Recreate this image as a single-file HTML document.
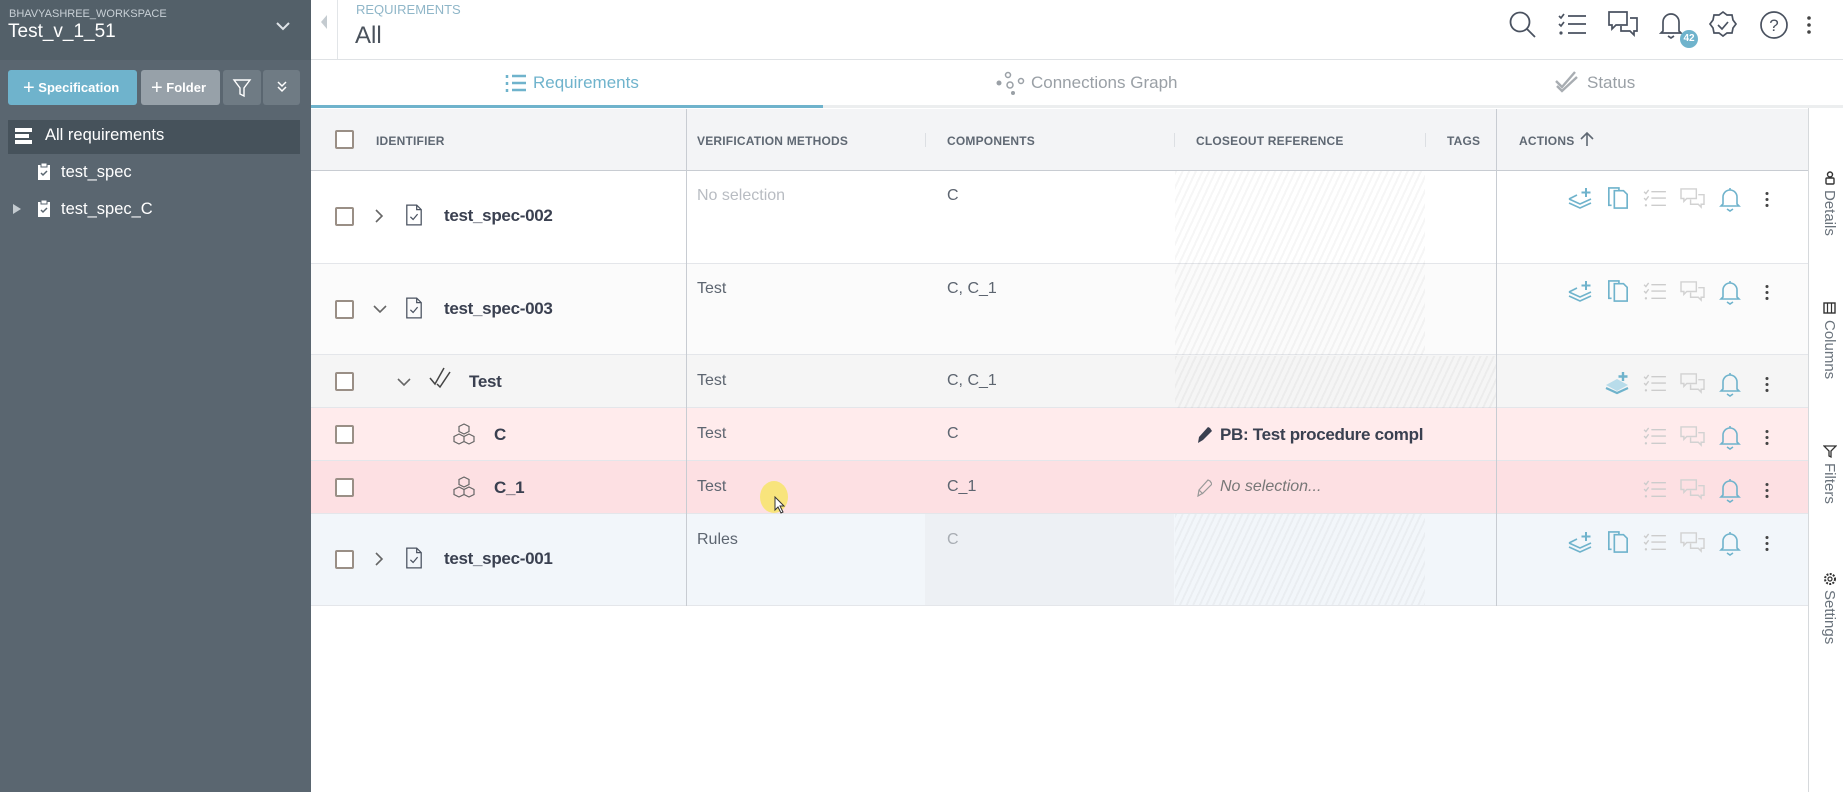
<!DOCTYPE html>
<html><head><meta charset="utf-8"><style>
*{box-sizing:border-box;margin:0;padding:0}
body{width:1843px;height:792px;overflow:hidden;font-family:"Liberation Sans",sans-serif;background:#fff;position:relative;color:#3c4452}
.a{position:absolute}
.sb{left:0;top:0;width:311px;height:792px;background:#5a6670}
.t{white-space:nowrap}
.cb{position:absolute;width:19px;height:19px;border:2px solid #9a8f86;border-radius:2px;background:#fff}
.row{position:absolute;left:311px;width:1497px;border-bottom:1px solid #e4e6ea}
.hd{font-size:12px;font-weight:bold;color:#5f6873;letter-spacing:.2px}
.id{font-size:17px;font-weight:bold;color:#3a4050;letter-spacing:-.3px}
.cell{font-size:16px;color:#5d6570}
.hatch{background:repeating-linear-gradient(115deg,rgba(0,0,0,.035) 0 2px,transparent 2px 6px)}
.vt{writing-mode:vertical-rl;font-size:15px;color:#6a737c}
</style></head><body>
<svg width="0" height="0" style="position:absolute">
<defs>
<symbol id="doc" viewBox="0 0 20 24"><path d="M2 1h11l5 5v17H2z M13 1v5h5" fill="none" stroke="#4a5260" stroke-width="1.4"/><path d="M6 14l3 3 5-6" fill="none" stroke="#4a5260" stroke-width="1.4"/></symbol>
<symbol id="lay" viewBox="0 0 26 24"><path d="M2 13l11 5 11-5 M2 17l11 5 11-5 M2 13l8-4" fill="none" stroke="#6fb3cc" stroke-width="1.6"/><path d="M19 2v9 M14.5 6.5h9" stroke="#6fb3cc" stroke-width="2"/></symbol>
<symbol id="cpy" viewBox="0 0 24 26"><path d="M8 5h10l4 4v15H8z M5 21H2V2h11v3" fill="none" stroke="#6fb3cc" stroke-width="1.8"/></symbol>
<symbol id="chk" viewBox="0 0 26 22"><path d="M1 3l2 2 3-4 M1 10l2 2 3-4 M9 3h16 M9 10h16 M9 18h16" fill="none" stroke="#ccc" stroke-width="1.5"/><circle cx="3" cy="18" r="1.3" fill="#ccc"/></symbol>
<symbol id="cht" viewBox="0 0 28 24"><path d="M2 2h16v10H8l-3 3v-3H2z M20 8h6v10h-3v3l-3-3h-8v-5" fill="none" stroke="#d2d2d2" stroke-width="1.5"/></symbol>
<symbol id="bel" viewBox="0 0 22 26"><path d="M4 18V11a7 7 0 0 1 14 0v7l2 2H2z M11 2v2 M8 23l3 2 3-2" fill="none" stroke="#6fb3cc" stroke-width="1.6"/></symbol>
<symbol id="cube" viewBox="0 0 24 24"><path d="M12 2l5 2.5v5L12 12 7 9.5v-5z M7 12l5 2.5v5L7 22l-5-2.5v-5z M17 12l5 2.5v5L17 22l-5-2.5v-5z" fill="none" stroke="#666" stroke-width="1.2"/></symbol>
<symbol id="dots" viewBox="0 0 6 20"><circle cx="3" cy="3" r="1.8" fill="#444"/><circle cx="3" cy="10" r="1.8" fill="#444"/><circle cx="3" cy="17" r="1.8" fill="#444"/></symbol>
</defs></svg>

<div class="a sb"></div>
<div class="a" style="left:0;top:0;width:311px;height:60px;background:#536069"></div>
<div class="a t" style="left:9px;top:8px;font-size:11px;color:#c8d0d6">BHAVYASHREE_WORKSPACE</div>
<div class="a t" style="left:8px;top:21px;font-size:19px;color:#fff">Test_v_1_51</div>
<svg class="a" style="left:276px;top:22px" width="14" height="10"><path d="M1 1l6 6 6-6" fill="none" stroke="#dfe4e8" stroke-width="2"/></svg>
<div class="a" style="left:8px;top:70px;width:129px;height:35px;background:#6fb3cc;border-radius:3px;color:#fff;font-size:13px;font-weight:bold;line-height:35px;padding-left:15px"><span style="font-size:20px;font-weight:normal;vertical-align:-2px">+</span> Specification</div>
<div class="a" style="left:141px;top:70px;width:79px;height:35px;background:#97a1a9;border-radius:3px;color:#fff;font-size:13px;font-weight:bold;line-height:35px;padding-left:10px"><span style="font-size:20px;font-weight:normal;vertical-align:-2px">+</span> Folder</div>
<div class="a" style="left:223px;top:70px;width:38px;height:35px;background:#6f7b84;border-radius:3px"></div>
<svg class="a" style="left:232px;top:78px" width="20" height="20"><path d="M2 2h16l-6 8v8l-4-2v-6z" fill="none" stroke="#fff" stroke-width="1.4"/></svg>
<div class="a" style="left:263px;top:70px;width:37px;height:35px;background:#6f7b84;border-radius:3px"></div>
<svg class="a" style="left:276px;top:81px" width="12" height="12"><path d="M2 1l4 4 4-4 M2 6l4 4 4-4" fill="none" stroke="#fff" stroke-width="1.5"/></svg>
<div class="a" style="left:8px;top:120px;width:292px;height:34px;background:#46525b"></div>
<div class="a" style="left:15px;top:128px;width:17px;height:4px;background:#fff"></div>
<div class="a" style="left:15px;top:134px;width:14px;height:4px;background:#fff"></div>
<div class="a" style="left:15px;top:140px;width:17px;height:4px;background:#fff"></div>
<div class="a t" style="left:45px;top:126px;font-size:16.5px;color:#fff">All requirements</div>
<svg class="a" style="left:37px;top:162px" width="14" height="19"><path d="M1 3h12v15H1z" fill="#fff"/><rect x="4" y="1" width="6" height="4" fill="#fff" stroke="#5a6670"/><path d="M4 11l2 2 4-4" fill="none" stroke="#5a6670" stroke-width="1.5"/></svg>
<div class="a t" style="left:61px;top:163px;font-size:16.5px;color:#fff">test_spec</div>
<svg class="a" style="left:12px;top:203px" width="10" height="12"><path d="M1 1l8 5-8 5z" fill="#c4cbd0"/></svg>
<svg class="a" style="left:37px;top:199px" width="14" height="19"><path d="M1 3h12v15H1z" fill="#fff"/><rect x="4" y="1" width="6" height="4" fill="#fff" stroke="#5a6670"/><path d="M4 11l2 2 4-4" fill="none" stroke="#5a6670" stroke-width="1.5"/></svg>
<div class="a t" style="left:61px;top:200px;font-size:16.5px;color:#fff">test_spec_C</div>

<!-- top header -->
<svg class="a" style="left:320px;top:14px" width="8" height="16"><path d="M7 1L1 8l6 7z" fill="#c4cbd0"/></svg>
<div class="a" style="left:337px;top:0;width:1px;height:59px;background:#e2e5e8"></div>
<div class="a t" style="left:356px;top:2px;font-size:13px;color:#8fb6c8">REQUIREMENTS</div>
<div class="a t" style="left:355px;top:22px;font-size:24px;color:#4a525c">All</div>
<div class="a" style="left:311px;top:59px;width:1532px;height:1px;background:#dfe2e5"></div>
<svg class="a" style="left:1508px;top:10px" width="30" height="30"><circle cx="12" cy="12" r="9.5" fill="none" stroke="#4a5260" stroke-width="1.8"/><path d="M19 19l8 8" stroke="#4a5260" stroke-width="1.8"/></svg>
<svg class="a" style="left:1558px;top:13px" width="30" height="24"><path d="M1 3l2 2 3-4 M1 11l2 2 3-4 M10 3h18 M10 11h18 M10 20h18" fill="none" stroke="#4a5260" stroke-width="1.7"/><circle cx="3" cy="20" r="1.6" fill="#4a5260"/></svg>
<svg class="a" style="left:1607px;top:10px" width="32" height="29"><path d="M2 2h18v13H9l-4 4v-4H2z M23 8h7v13h-3v4l-4-4h-9v-5" fill="none" stroke="#4a5260" stroke-width="1.7"/></svg>
<svg class="a" style="left:1659px;top:10px" width="26" height="30"><path d="M4 21V12a8 8 0 0 1 16 0v9l2 2H2z M9 26l3 2 3-2" fill="none" stroke="#4a5260" stroke-width="1.7"/></svg>
<div class="a" style="left:1680px;top:30px;width:18px;height:18px;border-radius:50%;background:#6fb3cc;color:#fff;font-size:10px;font-weight:bold;text-align:center;line-height:18px">42</div>
<svg class="a" style="left:1708px;top:10px" width="30" height="30"><path d="M15 2l4 3 5 0 1 5 3 4-3 4-1 5-5 0-4 3-4-3-5 0-1-5-3-4 3-4 1-5 5 0z" fill="none" stroke="#4a5260" stroke-width="1.7"/><path d="M10 15l4 4 6-7" fill="none" stroke="#4a5260" stroke-width="1.7"/></svg>
<svg class="a" style="left:1759px;top:10px" width="30" height="30"><circle cx="15" cy="15" r="13" fill="none" stroke="#4a5260" stroke-width="1.7"/><text x="15" y="21" text-anchor="middle" font-size="17" font-family="Liberation Sans" fill="#4a5260">?</text></svg>
<svg class="a" style="left:1806px;top:15px" width="6" height="20"><use href="#dots"/></svg>

<!-- tabs -->
<div class="a" style="left:311px;top:105px;width:1532px;height:3px;background:#eceeef"></div>
<div class="a" style="left:311px;top:105px;width:512px;height:3px;background:#6fb3cc"></div>
<svg class="a" style="left:505px;top:73px" width="22" height="20"><path d="M2 2v3 M2 9v3 M2 16v3 M7 3h14 M7 10h14 M7 17h14" stroke="#6fb3cc" stroke-width="2.5"/></svg>
<div class="a t" style="left:533px;top:73px;font-size:17px;color:#6fb3cc">Requirements</div>
<svg class="a" style="left:996px;top:70px" width="30" height="26"><circle cx="3" cy="13" r="2.5" fill="#9aa0a6"/><circle cx="12" cy="5" r="2.5" fill="none" stroke="#9aa0a6" stroke-width="1.5"/><circle cx="14" cy="15" r="3" fill="none" stroke="#9aa0a6" stroke-width="1.5"/><circle cx="25" cy="11" r="2.5" fill="none" stroke="#9aa0a6" stroke-width="1.5"/><circle cx="17" cy="23" r="2" fill="#9aa0a6"/></svg>
<div class="a t" style="left:1031px;top:73px;font-size:17px;color:#9aa0a6">Connections Graph</div>
<svg class="a" style="left:1555px;top:71px" width="24" height="22"><path d="M1 10l6 6L20 1 M2 15l5 5L22 6" fill="none" stroke="#a8adb2" stroke-width="2.4"/></svg>
<div class="a t" style="left:1587px;top:73px;font-size:17px;color:#9aa0a6">Status</div>

<!-- table header -->
<div class="a" style="left:311px;top:109px;width:1497px;height:62px;background:#f3f4f6;border-bottom:1px solid #c8ccd2"></div>
<div class="cb" style="left:335px;top:130px"></div>
<div class="a t hd" style="left:376px;top:134px">IDENTIFIER</div>
<div class="a t hd" style="left:697px;top:134px">VERIFICATION METHODS</div>
<div class="a" style="left:925px;top:133px;width:1px;height:14px;background:#dcdfe3"></div>
<div class="a t hd" style="left:947px;top:134px">COMPONENTS</div>
<div class="a" style="left:1174px;top:133px;width:1px;height:14px;background:#dcdfe3"></div>
<div class="a t hd" style="left:1196px;top:134px">CLOSEOUT REFERENCE</div>
<div class="a" style="left:1425px;top:133px;width:1px;height:14px;background:#dcdfe3"></div>
<div class="a t hd" style="left:1447px;top:134px">TAGS</div>
<div class="a t hd" style="left:1519px;top:134px">ACTIONS</div>
<svg class="a" style="left:1580px;top:131px" width="14" height="16"><path d="M7 15V2 M1 8l6-6 6 6" fill="none" stroke="#5f6873" stroke-width="1.6"/></svg>

<!-- rows -->
<div class="row" style="top:171px;height:93px;background:#fff"></div>
<div class="row" style="top:264px;height:91px;background:#fbfbfb"></div>
<div class="row" style="top:355px;height:53px;background:#f5f5f5"></div>
<div class="row" style="top:408px;height:53px;background:#ffebec"></div>
<div class="row" style="top:461px;height:53px;background:#fde0e3"></div>
<div class="row" style="top:514px;height:92px;background:#f2f6fa"></div>
<div class="a" style="left:925px;top:514px;width:249px;height:91px;background:#eaedf0;opacity:.6"></div>
<div class="a hatch" style="left:1175px;top:171px;width:250px;height:184px"></div>
<div class="a hatch" style="left:1175px;top:356px;width:321px;height:52px"></div>
<div class="a hatch" style="left:1175px;top:514px;width:250px;height:91px"></div>
<div class="a" style="left:686px;top:109px;width:1px;height:497px;background:#c8ccd2"></div>
<div class="a" style="left:1496px;top:109px;width:1px;height:497px;background:#c8ccd2"></div>

<!-- row1 -->
<div class="cb" style="left:335px;top:207px"></div>
<svg class="a" style="left:374px;top:208px" width="10" height="16"><path d="M2 2l6 6-6 6" fill="none" stroke="#666" stroke-width="1.6"/></svg>
<svg class="a" style="left:405px;top:203px" width="18" height="24"><use href="#doc"/></svg>
<div class="a t id" style="left:444px;top:206px">test_spec-002</div>
<div class="a t cell" style="left:697px;top:187px;color:#b8bcc2">No selection</div>
<div class="a t cell" style="left:947px;top:187px">C</div>
<!-- row2 -->
<div class="cb" style="left:335px;top:300px"></div>
<svg class="a" style="left:372px;top:304px" width="16" height="10"><path d="M2 2l6 6 6-6" fill="none" stroke="#666" stroke-width="1.6"/></svg>
<svg class="a" style="left:405px;top:296px" width="18" height="24"><use href="#doc"/></svg>
<div class="a t id" style="left:444px;top:299px">test_spec-003</div>
<div class="a t cell" style="left:697px;top:280px">Test</div>
<div class="a t cell" style="left:947px;top:280px">C, C_1</div>
<!-- Test -->
<div class="cb" style="left:335px;top:372px"></div>
<svg class="a" style="left:396px;top:377px" width="16" height="10"><path d="M2 2l6 6 6-6" fill="none" stroke="#666" stroke-width="1.6"/></svg>
<svg class="a" style="left:428px;top:366px" width="24" height="24"><path d="M2 12l5 6L16 2 M9 18l3 3L22 6" fill="none" stroke="#444" stroke-width="1.5"/></svg>
<div class="a t id" style="left:469px;top:372px">Test</div>
<div class="a t cell" style="left:697px;top:372px">Test</div>
<div class="a t cell" style="left:947px;top:372px">C, C_1</div>
<!-- C -->
<div class="cb" style="left:335px;top:425px"></div>
<svg class="a" style="left:452px;top:422px" width="24" height="24"><use href="#cube"/></svg>
<div class="a t id" style="left:494px;top:425px">C</div>
<div class="a t cell" style="left:697px;top:425px">Test</div>
<div class="a t cell" style="left:947px;top:425px">C</div>
<svg class="a" style="left:1196px;top:426px" width="16" height="18"><path d="M14 2l-2-1-9 10-1 6 5-3 9-9z" fill="#3a4050"/></svg>
<div class="a t id" style="left:1220px;top:425px;width:204px;overflow:hidden">PB: Test procedure compl</div>
<!-- C_1 -->
<div class="cb" style="left:335px;top:478px"></div>
<svg class="a" style="left:452px;top:475px" width="24" height="24"><use href="#cube"/></svg>
<div class="a t id" style="left:494px;top:478px">C_1</div>
<div class="a t cell" style="left:697px;top:478px">Test</div>
<div class="a t cell" style="left:947px;top:478px">C_1</div>
<svg class="a" style="left:1196px;top:479px" width="16" height="18"><path d="M14 2l-2-1-9 10-1 6 5-3 9-9z M3 11l4 4" fill="none" stroke="#999" stroke-width="1.2"/></svg>
<div class="a t cell" style="left:1220px;top:478px;font-style:italic;color:#777">No selection...</div>
<div class="a" style="left:760px;top:481px;width:28px;height:32px;border-radius:50%;background:#f7e46a;opacity:.85"></div>
<svg class="a" style="left:774px;top:496px" width="12" height="18"><path d="M1 1v13l3-3 3 6 2-1-3-6h4z" fill="#fff" stroke="#333" stroke-width="1"/></svg>
<!-- 001 -->
<div class="cb" style="left:335px;top:550px"></div>
<svg class="a" style="left:374px;top:551px" width="10" height="16"><path d="M2 2l6 6-6 6" fill="none" stroke="#666" stroke-width="1.6"/></svg>
<svg class="a" style="left:405px;top:546px" width="18" height="24"><use href="#doc"/></svg>
<div class="a t id" style="left:444px;top:549px">test_spec-001</div>
<div class="a t cell" style="left:697px;top:531px">Rules</div>
<div class="a t cell" style="left:947px;top:531px;color:#a8adb3">C</div>

<!-- actions -->
<svg class="a" style="left:1567px;top:186px" width="26" height="24"><use href="#lay"/></svg>
<svg class="a" style="left:1607px;top:186px" width="22" height="24"><use href="#cpy"/></svg>
<svg class="a" style="left:1643px;top:189px" width="24" height="20"><use href="#chk"/></svg>
<svg class="a" style="left:1679px;top:187px" width="27" height="23"><use href="#cht"/></svg>
<svg class="a" style="left:1719px;top:186px" width="22" height="26"><use href="#bel"/></svg>
<svg class="a" style="left:1764px;top:191px" width="6" height="17"><use href="#dots"/></svg>

<svg class="a" style="left:1567px;top:279px" width="26" height="24"><use href="#lay"/></svg>
<svg class="a" style="left:1607px;top:279px" width="22" height="24"><use href="#cpy"/></svg>
<svg class="a" style="left:1643px;top:282px" width="24" height="20"><use href="#chk"/></svg>
<svg class="a" style="left:1679px;top:280px" width="27" height="23"><use href="#cht"/></svg>
<svg class="a" style="left:1719px;top:279px" width="22" height="26"><use href="#bel"/></svg>
<svg class="a" style="left:1764px;top:284px" width="6" height="17"><use href="#dots"/></svg>

<svg class="a" style="left:1604px;top:371px" width="26" height="24"><path d="M2 14l11-6 11 6-11 6z" fill="#b8dcea"/><path d="M2 17l11 5 11-5" fill="none" stroke="#6fb3cc" stroke-width="2.2"/><path d="M19 1v9 M14.5 5.5h9" stroke="#6fb3cc" stroke-width="2.4"/></svg>
<svg class="a" style="left:1643px;top:374px" width="24" height="20"><use href="#chk"/></svg>
<svg class="a" style="left:1679px;top:372px" width="27" height="23"><use href="#cht"/></svg>
<svg class="a" style="left:1719px;top:371px" width="22" height="26"><use href="#bel"/></svg>
<svg class="a" style="left:1764px;top:376px" width="6" height="17"><use href="#dots"/></svg>

<svg class="a" style="left:1643px;top:427px" width="24" height="20"><use href="#chk"/></svg>
<svg class="a" style="left:1679px;top:425px" width="27" height="23"><use href="#cht"/></svg>
<svg class="a" style="left:1719px;top:424px" width="22" height="26"><use href="#bel"/></svg>
<svg class="a" style="left:1764px;top:429px" width="6" height="17"><use href="#dots"/></svg>

<svg class="a" style="left:1643px;top:480px" width="24" height="20"><use href="#chk"/></svg>
<svg class="a" style="left:1679px;top:478px" width="27" height="23"><use href="#cht"/></svg>
<svg class="a" style="left:1719px;top:477px" width="22" height="26"><use href="#bel"/></svg>
<svg class="a" style="left:1764px;top:482px" width="6" height="17"><use href="#dots"/></svg>

<svg class="a" style="left:1567px;top:530px" width="26" height="24"><use href="#lay"/></svg>
<svg class="a" style="left:1607px;top:530px" width="22" height="24"><use href="#cpy"/></svg>
<svg class="a" style="left:1643px;top:533px" width="24" height="20"><use href="#chk"/></svg>
<svg class="a" style="left:1679px;top:531px" width="27" height="23"><use href="#cht"/></svg>
<svg class="a" style="left:1719px;top:530px" width="22" height="26"><use href="#bel"/></svg>
<svg class="a" style="left:1764px;top:535px" width="6" height="17"><use href="#dots"/></svg>

<!-- right panel -->
<div class="a" style="left:1808px;top:108px;width:1px;height:684px;background:#d6d9dc"></div>
<svg class="a" style="left:1824px;top:171px" width="12" height="14"><circle cx="6" cy="3.5" r="2.5" fill="none" stroke="#333" stroke-width="1.4"/><rect x="2" y="7" width="8" height="6" rx="1" fill="none" stroke="#333" stroke-width="1.4"/></svg>
<div class="a t vt" style="left:1821px;top:190px">Details</div>
<svg class="a" style="left:1823px;top:302px" width="13" height="12"><rect x="1" y="1" width="11" height="10" fill="none" stroke="#333" stroke-width="1.4"/><path d="M4.5 1v10 M8.5 1v10" stroke="#333" stroke-width="1.2"/></svg>
<div class="a t vt" style="left:1821px;top:320px">Columns</div>
<svg class="a" style="left:1823px;top:445px" width="14" height="14"><path d="M1 1h12L8 6v6L6 11V6z" fill="none" stroke="#333" stroke-width="1.3"/></svg>
<div class="a t vt" style="left:1821px;top:463px">Filters</div>
<svg class="a" style="left:1823px;top:572px" width="14" height="14"><circle cx="7" cy="7" r="5" fill="none" stroke="#333" stroke-width="2" stroke-dasharray="2 1.3"/><circle cx="7" cy="7" r="2" fill="none" stroke="#333" stroke-width="1.2"/></svg>
<div class="a t vt" style="left:1821px;top:590px">Settings</div>
</body></html>
